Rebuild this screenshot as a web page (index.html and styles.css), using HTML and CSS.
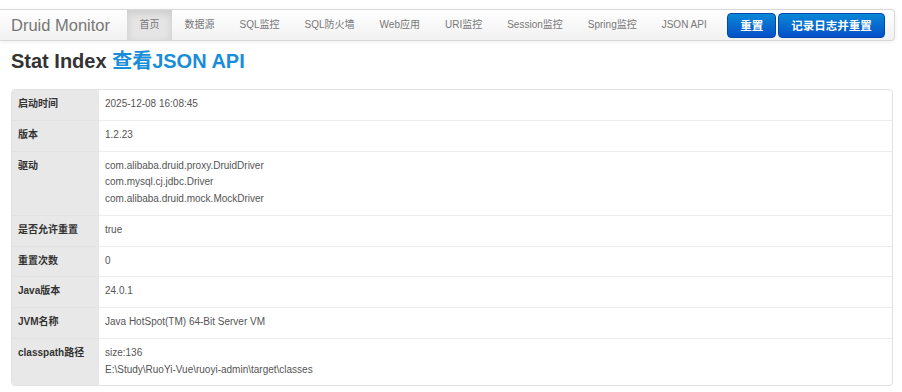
FILE: index.html
```html
<!DOCTYPE html>
<html lang="zh-CN">
<head>
    <meta charset="UTF-8">
    <title>Druid Stat Index</title>
    <link rel="stylesheet" href="styles.css">
</head>
<body>
    <div class="navbar">
        <span class="brand">Druid Monitor</span>
        <ul class="nav">
            <li class="active">首页</li>
            <li>数据源</li>
            <li>SQL监控</li>
            <li>SQL防火墙</li>
            <li>Web应用</li>
            <li>URI监控</li>
            <li>Session监控</li>
            <li>Spring监控</li>
            <li>JSON API</li>
        </ul>
        <div class="actions">
            <button class="btn">重置</button>
            <button class="btn">记录日志并重置</button>
        </div>
    </div>

    <h1 class="title">Stat Index <a href="#">查看JSON API</a></h1>

    <table class="stat-table">
        <tr><th>启动时间</th><td>2025-12-08 16:08:45</td></tr>
        <tr><th>版本</th><td>1.2.23</td></tr>
        <tr>
            <th>驱动</th>
            <td>com.alibaba.druid.proxy.DruidDriver<br>com.mysql.cj.jdbc.Driver<br>com.alibaba.druid.mock.MockDriver</td>
        </tr>
        <tr><th>是否允许重置</th><td>true</td></tr>
        <tr><th>重置次数</th><td>0</td></tr>
        <tr><th>Java版本</th><td>24.0.1</td></tr>
        <tr><th>JVM名称</th><td>Java HotSpot(TM) 64-Bit Server VM</td></tr>
        <tr>
            <th>classpath路径</th>
            <td>size:136<br>E:\Study\RuoYi-Vue\ruoyi-admin\target\classes</td>
        </tr>
    </table>
</body>
</html>
```

FILE: styles.css
```css
body {
    margin: 0;
    font-family: "Liberation Sans", Arial, "Noto Sans CJK SC", sans-serif;
    background-color: #fff;
    color: #333;
}
.navbar {
    display: flex;
    align-items: center;
    height: 32px;
    margin: 9px 7px 0 0;
    background: linear-gradient(#ffffff, #f1f1f1);
    border: 1px solid #d9d9d9;
    border-left: none;
    border-radius: 0 4px 4px 0;
    box-shadow: 0 1px 4px rgba(0, 0, 0, 0.07);
    box-sizing: border-box;
}
.brand {
    padding: 0 17px 0 11px;
    font-size: 16.5px;
    color: #777;
    line-height: 30px;
}
.nav {
    display: flex;
    list-style: none;
    margin: 0;
    padding: 0;
    align-self: stretch;
}
.nav li {
    padding: 0 12.5px;
    font-size: 10px;
    line-height: 30px;
    color: #777;
}
.nav li.active {
    background-color: #e5e5e5;
    box-shadow: inset 0 3px 8px rgba(0, 0, 0, 0.12);
}
.actions {
    display: flex;
    gap: 2px;
    margin-left: 8px;
}
.btn {
    height: 25px;
    padding: 0 12px;
    font-family: inherit;
    font-size: 11.5px;
    font-weight: bold;
    color: #fff;
    background: linear-gradient(#0a88d6, #0450c8);
    border: 1px solid #0645a8;
    border-radius: 4px;
    cursor: pointer;
}
.title {
    margin: 8px 0 16px;
    padding-left: 11px;
    font-size: 20px;
    line-height: 24px;
    font-weight: bold;
    color: #333;
}
.title a {
    color: #1a8dd8;
    text-decoration: none;
}
.stat-table {
    width: calc(100% - 20px);
    margin: 0 9px 0 11px;
    border: 1px solid #e2e2e2;
    border-radius: 4px;
    border-spacing: 0;
    font-size: 10px;
    line-height: 16.75px;
}
.stat-table th,
.stat-table td {
    padding: 6px 6px 7px;
    text-align: left;
    vertical-align: top;
    border-top: 1px solid #ececec;
}
.stat-table tr:first-child th,
.stat-table tr:first-child td {
    border-top: none;
}
.stat-table th {
    width: 75px;
    background-color: #e8e8e8;
    border-top-color: #e2e2e2;
    font-weight: bold;
    color: #333;
}
.stat-table td {
    color: #555;
}
```
